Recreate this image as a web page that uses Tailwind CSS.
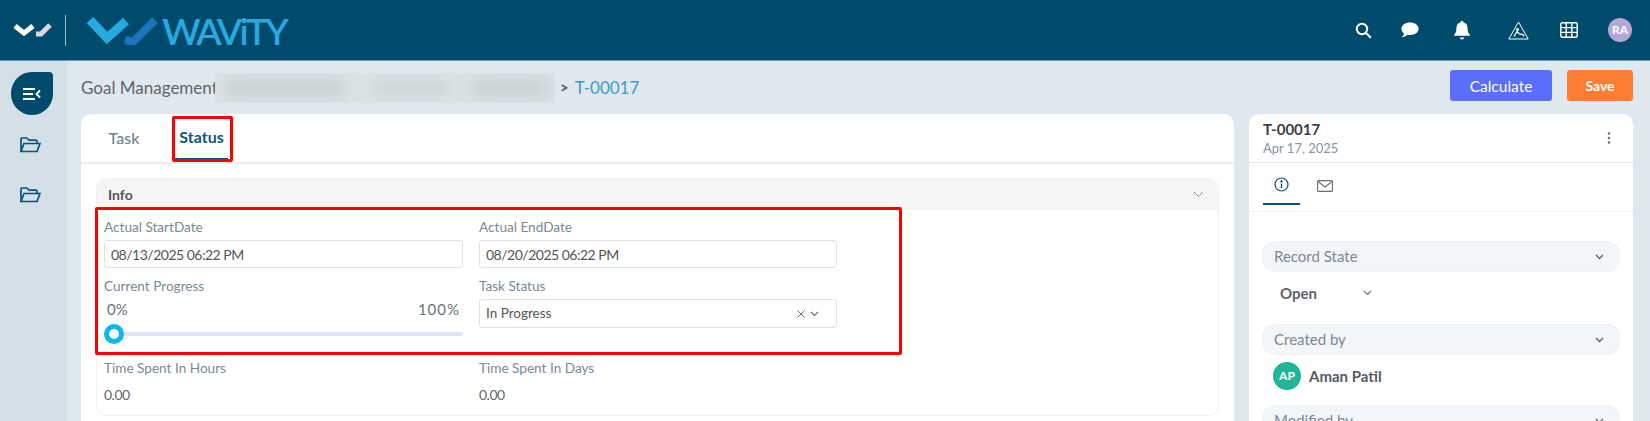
<!DOCTYPE html>
<html lang="en">
<head>
  <meta charset="UTF-8">
  <title>Wavity - Task</title>
  <script src="https://cdn.jsdelivr.net/npm/@tailwindcss/browser@4"></script>
</head>
<body class="relative h-[421px] w-[1650px] overflow-hidden bg-[#e0e8ef] font-['Lato',sans-serif] text-[#5b626b]">
  <!-- Top bar -->
  <header class="flex h-[61px] items-center justify-between border-b border-[#5f9ab5] bg-[#004b6b]">
    <div class="flex items-center">
      <svg class="ml-[13px] h-[16px] w-[40px]" viewBox="0 0 40 16" fill="none" stroke-width="5">
        <path d="M2 4 L11 11 L20 4" stroke="#ffffff"/>
        <path d="M23 12 L28 12 L37 3" stroke="#d9d9d9"/>
      </svg>
      <div class="ml-[12px] h-[31px] w-px bg-[#9fbccb]"></div>
      <svg class="ml-[19px] h-[30px] w-[72px]" viewBox="0 0 72 30" fill="none" stroke-width="9">
        <path d="M5 5 L22 23 L41 6" stroke="#29a9e0"/>
        <path d="M40 25 L48 27 L70 5" stroke="#1a75bc" stroke-width="8"/>
      </svg>
      <span class="ml-[5px] text-[37px] leading-none font-semibold tracking-[-2.7px] text-[#29a9e0]">WAViTY</span>
    </div>
    <div class="flex items-center">
      <svg class="h-[17px] w-[17px]" viewBox="0 0 17 17" fill="none" stroke="#fff" stroke-width="2"><circle cx="7" cy="7" r="5.2"/><path d="M11 11 L15.8 15.8"/></svg>
      <svg class="ml-[29px] h-[16px] w-[18px]" viewBox="0 0 18 16" fill="#fff"><path d="M9 0.5 C13.8 0.5 17.6 3 17.6 6.8 C17.6 10.6 13.8 13 9 13 C8 13 7.2 12.9 6.4 12.7 C5 14 3 15 0.6 15.2 C2 14 2.8 12.6 3 11.4 C1.4 10.3 0.4 8.7 0.4 6.8 C0.4 3 4.2 0.5 9 0.5Z"/></svg>
      <svg class="ml-[35px] h-[19px] w-[16px]" viewBox="0 0 16 19" fill="#fff"><path d="M8 0 C9 0 9.6 0.7 9.6 1.6 C12.4 2.3 13.6 4.6 13.6 7.4 C13.6 10.6 14.4 12 15.8 13.6 L15.8 14.8 L0.2 14.8 L0.2 13.6 C1.6 12 2.4 10.6 2.4 7.4 C2.4 4.6 3.6 2.3 6.4 1.6 C6.4 0.7 7 0 8 0Z"/><path d="M5.8 16.4 H10.2 C10 17.6 9.2 18.4 8 18.4 C6.8 18.4 6 17.6 5.8 16.4Z"/></svg>
      <svg class="ml-[38px] h-[19px] w-[21px]" viewBox="0 0 21 19" fill="none" stroke="#fff" stroke-width="1"><path d="M10.5 1 L20.2 18 L0.8 18 Z"/><circle cx="9.5" cy="8.6" r="1.1" fill="#fff"/><path d="M6 15.5 L9 10.5 L11.5 13 L15 13.5 L16 15.5" stroke-width="1.3"/></svg>
      <svg class="ml-[31px] h-[16px] w-[18px]" viewBox="0 0 18 16" fill="none" stroke="#fff" stroke-width="1.4"><rect x="0.8" y="0.8" width="16.4" height="14.4" rx="1.5"/><path d="M0.8 5.6 H17.2 M0.8 10.4 H17.2 M6.2 0.8 V15.2 M11.8 0.8 V15.2"/></svg>
      <div class="mr-[18px] ml-[30px] flex h-[24px] w-[24px] items-center justify-center rounded-full bg-[#b6a6d2] text-[12px] font-bold text-white">RA</div>
    </div>
  </header>

  <div class="flex h-[360px]">
    <!-- Left rail -->
    <aside class="flex w-[67px] flex-col items-start bg-[#d3e0e7] pt-[11px] pl-[11px]">
      <div class="flex h-[43px] w-[42px] items-center justify-center rounded-[21px] rounded-tr-[4px] bg-[#004b6b]">
        <svg class="h-[12px] w-[18px]" viewBox="0 0 18 12" fill="none" stroke="#fff" stroke-width="1.8"><path d="M0 1 H12 M0 6 H10 M0 11 H12 M17 2.5 L13.5 6 L17 9.5"/></svg>
      </div>
      <svg class="mt-[22px] ml-[9px] h-[16px] w-[21px]" viewBox="0 0 21 16" fill="none" stroke="#0b5273" stroke-width="1.7"><path d="M1 14.5 V2 Q1 1 2 1 H7 L9 3.2 H16 Q17 3.2 17 4.2 V6"/><path d="M1 14.5 L4 6.5 H20 L17 14.5 Z"/></svg>
      <svg class="mt-[34px] ml-[9px] h-[16px] w-[21px]" viewBox="0 0 21 16" fill="none" stroke="#0b5273" stroke-width="1.7"><path d="M1 14.5 V2 Q1 1 2 1 H7 L9 3.2 H16 Q17 3.2 17 4.2 V6"/><path d="M1 14.5 L4 6.5 H20 L17 14.5 Z"/></svg>
    </aside>

    <main class="flex-1 pr-[17px] pl-[14px]">
      <!-- Breadcrumb and actions -->
      <div class="flex h-[53px] items-center justify-between">
        <div class="flex items-center">
          <span class="w-[134px] overflow-hidden text-[17px] whitespace-nowrap text-[#5f6469]">Goal Management</span>
          <div class="relative h-[30px] w-[340px] overflow-hidden bg-[#dde3e6]">
            <div class="absolute top-[8px] left-[8px] h-[14px] w-[125px] rounded-full bg-[#c3cbce] blur-[8px]"></div>
            <div class="absolute top-[9px] left-[155px] h-[12px] w-[80px] rounded-full bg-[#c9d0d3] blur-[8px]"></div>
            <div class="absolute top-[8px] left-[255px] h-[14px] w-[80px] rounded-full bg-[#c3cbce] blur-[8px]"></div>
          </div>
          <span class="ml-[5px] text-[15px] font-bold text-[#555]">&gt;</span>
          <span class="ml-[6px] text-[17px] text-[#3d9cc7]">T-00017</span>
        </div>
        <div class="flex items-start gap-[15px] self-start pt-[9px]">
          <button class="h-[31px] w-[102px] rounded-[3px] bg-[#5a6dfb] pt-[2px] text-[15.5px] text-white">Calculate</button>
          <button class="h-[31px] w-[66px] rounded-[3px] bg-[#ff7d32] text-[14px] font-bold text-white">Save</button>
        </div>
      </div>

      <div class="flex gap-[15px]">
        <!-- Main card -->
        <section class="h-[320px] w-[1153px] rounded-t-[10px] bg-white">
          <div class="h-[50px] border-b-2 border-[#eeeeee] pl-[14px]">
            <div class="flex h-[46px]">
              <div class="flex w-[58px] items-center justify-center pt-[2px] text-[16px] font-medium text-[#6f8192]">Task</div>
              <div class="ml-[22px] flex w-[53px] items-center justify-center border-b-2 border-[#0b5273] pt-[2px] text-[16px] font-bold text-[#0f5674]">Status</div>
            </div>
          </div>
          <div class="mx-[15px] mt-[14px] h-[238px] rounded-[10px] border border-[#eef0f2]">
            <div class="flex h-[31px] items-center justify-between rounded-t-[10px] bg-[#f5f5f5] pr-[14px] pl-[11px]">
              <span class="text-[14px] font-bold text-[#555]">Info</span>
              <svg class="h-[7px] w-[11px]" viewBox="0 0 11 7" fill="none" stroke="#8a98a5" stroke-width="1"><path d="M1 1 L5.5 5.5 L10 1"/></svg>
            </div>
            <div class="grid grid-cols-[359px_358px] gap-x-[16px] pt-[6px] pl-[7px]">
              <div>
                <label class="block h-[22px] text-[13.6px] leading-[22px] text-[#7c8894]">Actual StartDate</label>
                <div class="mt-[2px] flex h-[28px] items-center rounded-[3px] border border-[#dfe2e5] pl-[6px] text-[14px] tracking-[-0.5px] text-[#555]">08/13/2025 06:22 PM</div>
              </div>
              <div>
                <label class="block h-[22px] text-[13.6px] leading-[22px] text-[#7c8894]">Actual EndDate</label>
                <div class="mt-[2px] flex h-[28px] items-center rounded-[3px] border border-[#dfe2e5] pl-[6px] text-[14px] tracking-[-0.5px] text-[#555]">08/20/2025 06:22 PM</div>
              </div>
              <div class="mt-[7px]">
                <label class="block h-[22px] text-[13.6px] leading-[22px] text-[#7c8894]">Current Progress</label>
                <div class="mt-[2px] flex h-[20px] items-center justify-between pr-[3px] pl-[3px] text-[15px] text-[#667280]"><span>0%</span><span class="tracking-[1px]">100%</span></div>
                <div class="relative mt-[6px] h-[18px]">
                  <div class="absolute top-[7px] right-0 left-0 h-[4px] rounded-full bg-[#dde4f3]"></div>
                  <div class="absolute top-[-1px] left-0 h-[20px] w-[20px] rounded-full border-[5px] border-[#0fb5ee] bg-white"></div>
                </div>
              </div>
              <div class="mt-[7px]">
                <label class="block h-[22px] text-[13.6px] leading-[22px] text-[#7c8894]">Task Status</label>
                <div class="mt-[2px] flex h-[29px] items-center justify-between rounded-[3px] border border-[#dfe2e5] pr-[17px] pl-[6px] text-[13.5px] text-[#555]">
                  <span>In Progress</span>
                  <span class="flex items-center gap-[5px]">
                    <svg class="h-[8px] w-[8px]" viewBox="0 0 8 8" fill="none" stroke="#667280" stroke-width="1"><path d="M0.5 0.5 L7.5 7.5 M7.5 0.5 L0.5 7.5"/></svg>
                    <svg class="h-[6px] w-[9px]" viewBox="0 0 9 6" fill="none" stroke="#667280" stroke-width="1.2"><path d="M1 1 L4.5 4.5 L8 1"/></svg>
                  </span>
                </div>
              </div>
              <div class="mt-[14px]">
                <label class="block h-[22px] text-[13.6px] leading-[22px] text-[#7c8894]">Time Spent In Hours</label>
                <div class="mt-[5px] text-[14px] leading-[21px] tracking-[-0.5px] text-[#666]">0.00</div>
              </div>
              <div class="mt-[14px]">
                <label class="block h-[22px] text-[13.6px] leading-[22px] text-[#7c8894]">Time Spent In Days</label>
                <div class="mt-[5px] text-[14px] leading-[21px] tracking-[-0.5px] text-[#666]">0.00</div>
              </div>
            </div>
          </div>
        </section>

        <!-- Details panel -->
        <section class="h-[320px] w-[384px] rounded-t-[10px] bg-white">
          <div class="flex h-[49px] items-center justify-between border-b border-[#e8e8e8] pr-[22px] pl-[14px]">
            <div>
              <div class="text-[15px] leading-[19px] font-bold text-[#3c4146]">T-00017</div>
              <div class="text-[13px] leading-[18px] text-[#8b939b]">Apr 17, 2025</div>
            </div>
            <svg class="h-[12px] w-[4px]" viewBox="0 0 4 12" fill="#667280"><circle cx="2" cy="1.5" r="1.3"/><circle cx="2" cy="6" r="1.3"/><circle cx="2" cy="10.5" r="1.3"/></svg>
          </div>
          <div class="flex h-[49px] border-b border-[#efefef] pl-[14px]">
            <div class="flex h-[42px] w-[37px] items-center justify-center border-b-2 border-[#0b5273] pt-[3px]">
              <svg class="h-[15px] w-[15px]" viewBox="0 0 15 15" fill="none" stroke="#0b5273" stroke-width="1.2"><circle cx="7.5" cy="7.5" r="6.5"/><path d="M7.5 6.6 V11" stroke-width="1.4"/><circle cx="7.5" cy="4.4" r="0.6" fill="#0b5273"/></svg>
            </div>
            <div class="ml-[17px] flex h-[42px] items-center pt-[3px]">
              <svg class="h-[12px] w-[16px]" viewBox="0 0 16 12" fill="none" stroke="#6b6b6b" stroke-width="1.1"><rect x="0.6" y="0.6" width="14.8" height="10.8" rx="1"/><path d="M1 1.5 L8 7 L15 1.5"/></svg>
            </div>
          </div>
          <div class="px-[13px] pt-[29px]">
            <div class="flex h-[31px] items-center justify-between rounded-[12px] border border-[#eff3f5] bg-[#f3f6f8] pr-[15px] pl-[11px] text-[15px] text-[#7c8894]">
              <span>Record State</span>
              <svg class="h-[6px] w-[9px]" viewBox="0 0 9 6" fill="none" stroke="#55606b" stroke-width="1.3"><path d="M1 1 L4.5 4.5 L8 1"/></svg>
            </div>
            <div class="flex h-[37px] items-center pt-[5px] pl-[18px] text-[15px] font-bold text-[#5f656c]">
              <span class="w-[83px]">Open</span>
              <svg class="h-[6px] w-[9px]" viewBox="0 0 9 6" fill="none" stroke="#667280" stroke-width="1.1"><path d="M1 1 L4.5 4.5 L8 1"/></svg>
            </div>
            <div class="mt-[15px] flex h-[31px] items-center justify-between rounded-[12px] border border-[#eff3f5] bg-[#f3f6f8] pr-[15px] pl-[11px] text-[15px] text-[#7c8894]">
              <span>Created by</span>
              <svg class="h-[6px] w-[9px]" viewBox="0 0 9 6" fill="none" stroke="#55606b" stroke-width="1.3"><path d="M1 1 L4.5 4.5 L8 1"/></svg>
            </div>
            <div class="mt-[7px] flex items-center pl-[11px]">
              <div class="flex h-[28px] w-[28px] items-center justify-center rounded-full bg-[#1fb597] text-[12px] font-bold text-white">AP</div>
              <span class="ml-[8px] text-[15px] font-bold text-[#555b62]">Aman Patil</span>
            </div>
            <div class="mt-[15px] flex h-[31px] items-center justify-between rounded-[12px] border border-[#eff3f5] bg-[#f3f6f8] pr-[15px] pl-[11px] text-[15px] text-[#7c8894]">
              <span>Modified by</span>
              <svg class="h-[6px] w-[9px]" viewBox="0 0 9 6" fill="none" stroke="#55606b" stroke-width="1.3"><path d="M1 1 L4.5 4.5 L8 1"/></svg>
            </div>
          </div>
        </section>
      </div>
    </main>
  </div>

  <!-- Red annotation boxes drawn over the screenshot -->
  <div class="absolute top-[116px] left-[172px] h-[46px] w-[61px] rounded-[2px] border-[3px] border-[#ff0000]"></div>
  <div class="absolute top-[207px] left-[95px] h-[148px] w-[807px] rounded-[2px] border-[3px] border-[#ff0000]"></div>
</body>
</html>
